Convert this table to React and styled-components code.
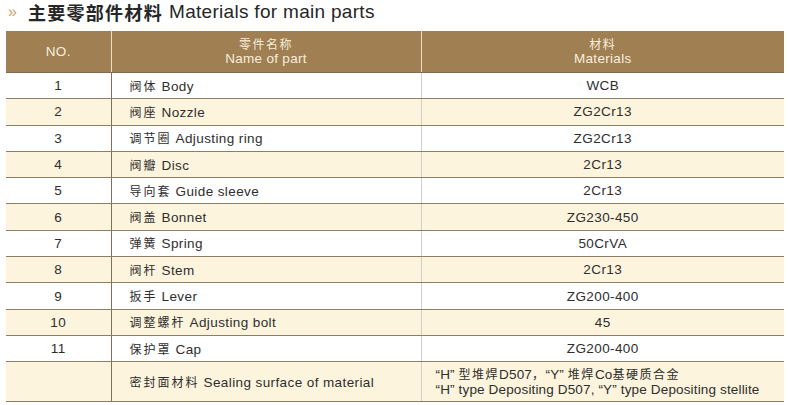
import React from "react";
import styled, { createGlobalStyle } from "styled-components";

const parts = [
  { no: "1", cn: "阀体", en: "Body", mat: "WCB" },
  { no: "2", cn: "阀座", en: "Nozzle", mat: "ZG2Cr13" },
  { no: "3", cn: "调节圈", en: "Adjusting ring", mat: "ZG2Cr13" },
  { no: "4", cn: "阀瓣", en: "Disc", mat: "2Cr13" },
  { no: "5", cn: "导向套", en: "Guide sleeve", mat: "2Cr13" },
  { no: "6", cn: "阀盖", en: "Bonnet", mat: "ZG230-450" },
  { no: "7", cn: "弹簧", en: "Spring", mat: "50CrVA" },
  { no: "8", cn: "阀杆", en: "Stem", mat: "2Cr13" },
  { no: "9", cn: "扳手", en: "Lever", mat: "ZG200-400" },
  { no: "10", cn: "调整螺杆", en: "Adjusting bolt", mat: "45" },
  { no: "11", cn: "保护罩", en: "Cap", mat: "ZG200-400" },
];

const GlobalStyle = createGlobalStyle`
  body {
    margin: 0;
    background: #ffffff;
    font-family: "Liberation Sans", "Noto Sans CJK SC", sans-serif;
    color: #2e2e2e;
  }
`;

const Page = styled.div`
  width: 790px;
  height: 405px;
  padding: 0 6px;
  box-sizing: border-box;
  overflow: hidden;
`;

const Title = styled.h1`
  margin: 0;
  height: 31px;
  display: flex;
  align-items: flex-start;
  font-size: 19px;
  font-weight: 700;
  line-height: 24px;
  color: #262626;
  white-space: nowrap;
`;

const Arrows = styled.span`
  color: #c9a66e;
  font-weight: 400;
  font-size: 16px;
  margin: 0 11px 0 2px;
`;

const TitleCn = styled.span`
  font-family: "Noto Sans CJK SC", sans-serif;
  font-size: 18px;
  letter-spacing: 1.3px;
  margin-right: 6px;
`;

const TitleEn = styled.span`
  font-weight: 400;
  letter-spacing: 0.3px;
`;

const Table = styled.table`
  width: 778px;
  border-collapse: collapse;
  table-layout: fixed;
`;

const HeadCell = styled.th`
  background: #a07f53;
  color: #f6eedd;
  font-weight: 400;
  font-size: 13.5px;
  line-height: 14px;
  height: 41px;
  padding: 0;
  text-align: center;
  border-left: 1px solid #eadfc9;
  border-bottom: 1px solid #7e6c52;
  letter-spacing: 0.3px;
  &:first-child {
    border-left: none;
  }
`;

const CnSmall = styled.span`
  font-family: "Noto Sans CJK SC", sans-serif;
  font-size: 12px;
  letter-spacing: 1.5px;
`;

const Row = styled.tr`
  background: ${(p) => (p.$shade ? "#fdf4dd" : "#ffffff")};
`;

const Cell = styled.td`
  height: ${(p) => (p.$tall ? "39px" : "25.3px")};
  padding: 0;
  font-size: 13.5px;
  line-height: 15px;
  letter-spacing: ${(p) => p.$spacing || "0.4px"};
  color: #2e2e2e;
  border-bottom: 1px solid #8e7e66;
  text-align: ${(p) => p.$align || "center"};
  padding-left: ${(p) => (p.$align === "left" ? p.$indent || "18px" : "0")};
  border-left: ${(p) => p.$divider || "none"};
  vertical-align: middle;
  white-space: nowrap;
`;

const PartCn = styled.span`
  font-family: "Noto Sans CJK SC", sans-serif;
  font-size: 12px;
  letter-spacing: 2px;
  margin-right: 4px;
`;

const InlineCn = styled.span`
  font-family: "Noto Sans CJK SC", sans-serif;
  font-size: 12px;
  letter-spacing: 1.5px;
`;

const Line = styled.div``;

export default function App() {
  return (
    <>
      <GlobalStyle />
      <Page>
        <Title>
          <Arrows>»</Arrows>
          <TitleCn>主要零部件材料</TitleCn>
          <TitleEn>Materials for main parts</TitleEn>
        </Title>
        <Table>
          <colgroup>
            <col style={{ width: "105px" }} />
            <col style={{ width: "310px" }} />
            <col style={{ width: "363px" }} />
          </colgroup>
          <thead>
            <tr>
              <HeadCell>NO.</HeadCell>
              <HeadCell>
                <Line><CnSmall>零件名称</CnSmall></Line>
                <Line>Name of part</Line>
              </HeadCell>
              <HeadCell>
                <Line><CnSmall>材料</CnSmall></Line>
                <Line>Materials</Line>
              </HeadCell>
            </tr>
          </thead>
          <tbody>
            {parts.map((p, i) => (
              <Row key={p.no} $shade={i % 2 === 1}>
                <Cell>{p.no}</Cell>
                <Cell $align="left" $divider="1px solid #7d6f5c">
                  <PartCn>{p.cn}</PartCn>
                  {p.en}
                </Cell>
                <Cell $divider="1px solid #cfcfcf">{p.mat}</Cell>
              </Row>
            ))}
            <Row $shade>
              <Cell $tall />
              <Cell $tall $align="left" $divider="1px solid #7d6f5c">
                <PartCn>密封面材料</PartCn>
                Sealing surface of material
              </Cell>
              <Cell $tall $align="left" $indent="14px" $spacing="0.15px" $divider="1px solid #cfcfcf">
                <Line>
                  “H” <InlineCn>型堆焊</InlineCn>D507<InlineCn>，</InlineCn>“Y” <InlineCn>堆焊</InlineCn>Co<InlineCn>基硬质合金</InlineCn>
                </Line>
                <Line>“H” type Depositing D507, “Y” type Depositing stellite</Line>
              </Cell>
            </Row>
          </tbody>
        </Table>
      </Page>
    </>
  );
}
